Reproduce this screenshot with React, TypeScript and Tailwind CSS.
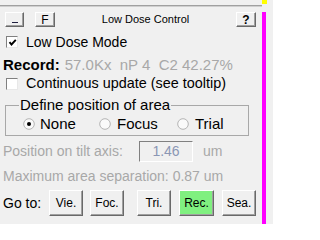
import React from "react";

const btn =
  "flex items-center justify-center border border-t-white border-l-white border-r-[#696969] border-b-[#696969] shadow-[inset_-1px_-1px_0_#a0a0a0] text-[12px] text-black";

function CheckBox({ checked }: { checked?: boolean }) {
  return (
    <span className="flex h-[12px] w-[12px] shrink-0 items-center justify-center border border-t-[#808080] border-l-[#808080] border-r-[#e8e8e8] border-b-[#e8e8e8] bg-white">
      {checked ? (
        <svg width="9" height="9" viewBox="0 0 9 9">
          <path d="M1.5 4.2 L3.5 6.5 L7.8 1.8" fill="none" stroke="#000" strokeWidth="1.9" />
        </svg>
      ) : null}
    </span>
  );
}

function Radio({ checked }: { checked?: boolean }) {
  return (
    <svg width="12" height="12" viewBox="0 0 12 12" className="shrink-0">
      <circle cx="6" cy="6" r="5.3" fill="#fafafa" stroke="#b4b4b4" strokeWidth="1" />
      {checked ? <circle cx="6" cy="6" r="2" fill="#000" /> : null}
    </svg>
  );
}

export default function App() {
  return (
    <div className="flex h-[224px] w-[273px] overflow-hidden bg-[#f0f0f0] font-['Liberation_Sans',Arial,sans-serif] text-black">
      <div className="flex w-[262px] flex-col">
        <div className="h-[5px]" />
        <div className="h-[1px] bg-[#a0a0a0]" />
        <div className="h-[1px] bg-[#cfcfcf]" />

        {/* title row */}
        <div className="mt-[5px] flex h-[15px] items-center">
          <div className={`${btn} ml-[5px] h-[15px] w-[19px]`}>
            <span className="mt-[5px] h-[1px] w-[6px] bg-[#202040]" />
          </div>
          <div className={`${btn} ml-[11px] h-[15px] w-[20px] text-[11px] text-[#1a2a60]`}>F</div>
          <div className="flex-1 text-center text-[11px] leading-none">Low Dose Control</div>
          <div className={`${btn} mr-[6px] h-[15px] w-[20px] text-[12px] font-bold text-[#203070]`}>?</div>
        </div>

        <div className="mt-[5px] flex h-[20px] items-center">
          <span className="ml-[6px]"><CheckBox checked /></span>
          <span className="ml-[8px] text-[14px]">Low Dose Mode</span>
        </div>

        <div className="mt-[3px] flex h-[20px] items-center whitespace-pre text-[15px]">
          <span className="ml-[3px] font-bold">Record:</span>
          <span className="ml-[5px] text-[#a8a8a8]">57.0Kx  nP 4  C2 42.27%</span>
        </div>

        <div className="flex h-[18px] items-center">
          <span className="ml-[6px]"><CheckBox /></span>
          <span className="ml-[8px] text-[14.4px]">Continuous update (see tooltip)</span>
        </div>

        <fieldset className="ml-[5px] mt-[4px] w-[244px] border border-[#a8a8a8] p-0">
          <legend className="ml-[13px] px-[1px] text-[15px] leading-[16px]">Define position of area</legend>
          <div className="flex h-[22px] items-center text-[15px]">
            <div className="ml-[17px] flex w-[76px] items-center gap-[5px]">
              <Radio checked />
              <span>None</span>
            </div>
            <div className="flex w-[78px] items-center gap-[6px]">
              <Radio />
              <span>Focus</span>
            </div>
            <div className="flex items-center gap-[6px]">
              <Radio />
              <span>Trial</span>
            </div>
          </div>
        </fieldset>

        <div className="mt-[5px] flex h-[21px] items-center text-[14px] text-[#a8a8a8]">
          <span className="ml-[3px] w-[136px]">Position on tilt axis:</span>
          <div className="flex h-[21px] w-[54px] items-center justify-center border border-t-[#808080] border-l-[#808080] border-r-white border-b-white text-[14px] text-[#8a96b4]">
            1.46
          </div>
          <span className="ml-[10px]">um</span>
        </div>

        <div className="mt-[4px] flex h-[20px] items-center text-[14px] text-[#a8a8a8]">
          <span className="ml-[3px]">Maximum area separation:  0.87 um</span>
        </div>

        <div className="mt-[4px] flex h-[26px] items-center">
          <span className="ml-[3px] w-[46px] text-[14px]">Go to:</span>
          <div className={`${btn} h-[26px] w-[34px]`}>Vie.</div>
          <div className={`${btn} ml-[7px] h-[26px] w-[34px]`}>Foc.</div>
          <div className={`${btn} ml-[13px] h-[26px] w-[34px]`}>Tri.</div>
          <div className={`${btn} ml-[8px] h-[26px] w-[35px] bg-[#80f080]`}>Rec.</div>
          <div className={`${btn} ml-[8px] h-[26px] w-[34px]`}>Sea.</div>
        </div>
      </div>

      <div className="flex w-[5px] flex-col">
        <div className="h-[4px] w-[5px] bg-[#ffff00]" />
        <div className="mt-[8px] w-[4px] flex-1 bg-[#ff00ff]" />
      </div>
    </div>
  );
}
